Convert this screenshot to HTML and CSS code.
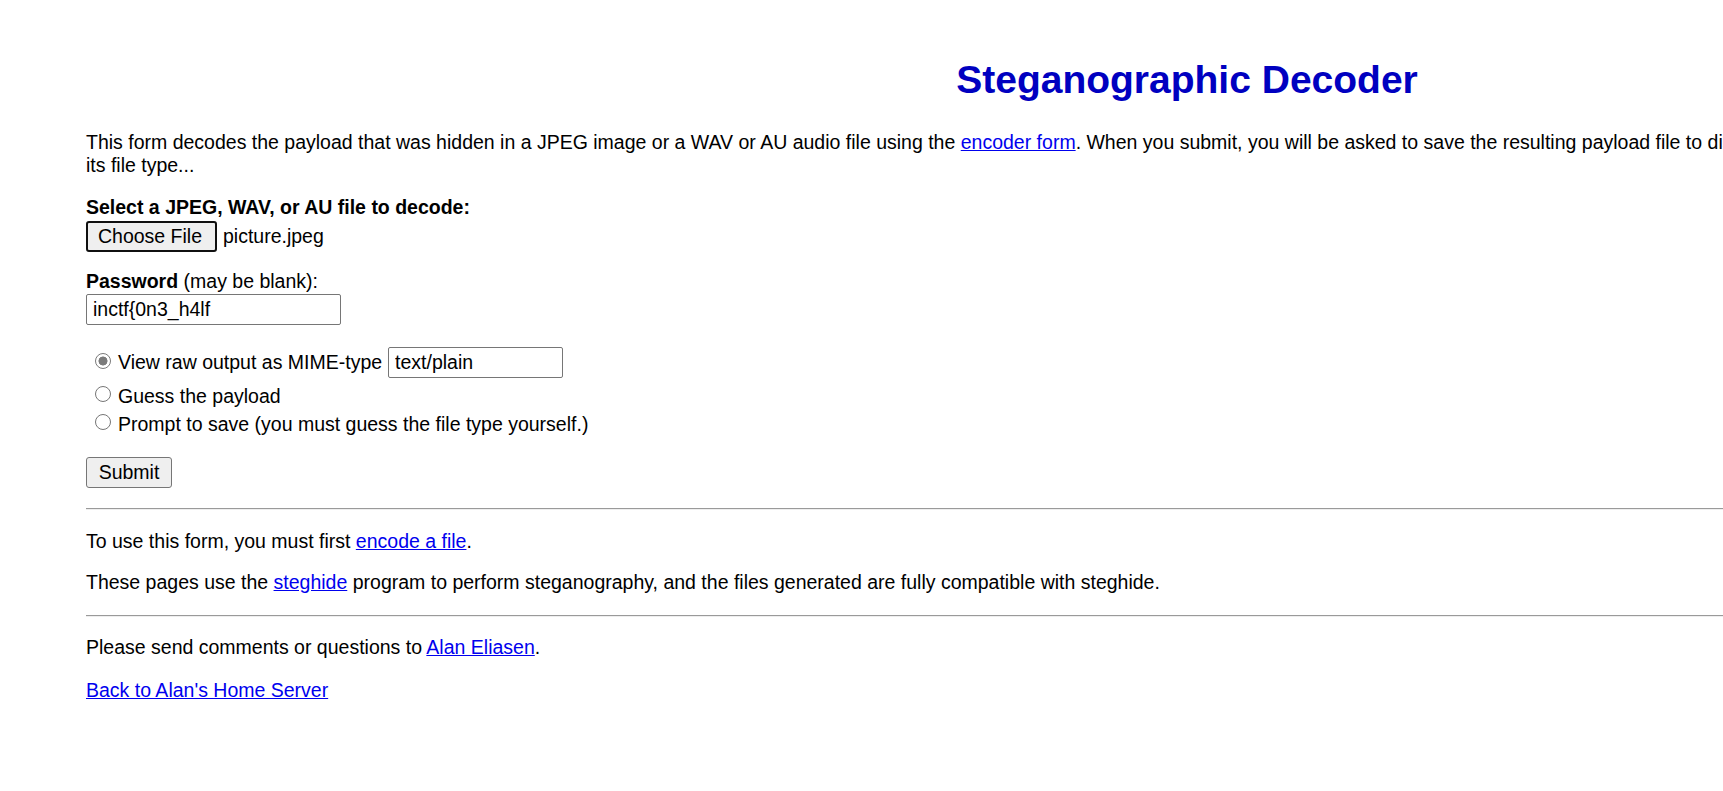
FILE: index.html
```html
<!DOCTYPE html>
<html lang="en">
<head>
<meta charset="utf-8">
<title>Steganographic Decoder</title>
<link rel="stylesheet" href="styles.css">
</head>
<body>
<div class="page">
  <h1 class="title">Steganographic Decoder</h1>
  <p class="intro">This form decodes the payload that was hidden in a JPEG image or a WAV or AU audio file using the <a href="#">encoder form</a>. When you submit, you will be asked to save the resulting payload file to disk. Choose "Guess the payload" to let the program guess<br>its file type...</p>

  <form class="form">
    <div class="field field--file">
      <div class="label"><b>Select a JPEG, WAV, or AU file to decode:</b></div>
      <div class="file-row">
        <span class="btn btn--file">Choose File</span>
        <span class="file-name">picture.jpeg</span>
      </div>
    </div>

    <div class="field field--pw">
      <div class="label"><b>Password</b> (may be blank):</div>
      <input class="text-input text-input--pw" type="text" value="inctf{0n3_h4lf">
    </div>

    <div class="radios">
      <label class="radio-row radio-row--mime">
        <input class="radio" type="radio" name="mode" checked>
        <span class="radio-text">View raw output as MIME-type</span>
        <input class="text-input text-input--mime" type="text" value="text/plain">
      </label>
      <label class="radio-row">
        <input class="radio" type="radio" name="mode">
        <span class="radio-text">Guess the payload</span>
      </label>
      <label class="radio-row">
        <input class="radio" type="radio" name="mode">
        <span class="radio-text">Prompt to save (you must guess the file type yourself.)</span>
      </label>
    </div>

    <button class="btn btn--submit" type="button">Submit</button>
  </form>

  <hr class="rule rule--first">
  <p class="note note--first">To use this form, you must first <a href="#">encode a file</a>.</p>
  <p class="note">These pages use the <a href="#">steghide</a> program to perform steganography, and the files generated are fully compatible with steghide.</p>
  <hr class="rule rule--second">
  <p class="note note--contact">Please send comments or questions to <a href="#">Alan Eliasen</a>.</p>
  <p class="note note--back"><a href="#">Back to Alan's Home Server</a></p>
</div>
</body>
</html>
```

FILE: styles.css
```css
html, body {
  margin: 0;
  padding: 0;
  background: #ffffff;
  overflow: hidden;
}

body {
  font-family: "Liberation Sans", Arial, sans-serif;
  font-size: 19.5px;
  line-height: 23px;
  color: #000000;
}

.page {
  width: 2202px;
  margin-left: 86px;
  padding-top: 57px;
}

a {
  color: #0000ee;
  text-decoration: underline;
}

.title {
  margin: 0;
  font-size: 39px;
  line-height: 45px;
  font-weight: bold;
  text-align: center;
  color: #0000c0;
}

.intro {
  margin: 29px 0 0;
}

.form {
  margin: 0;
}

.field--file {
  margin-top: 19px;
}

.field--pw {
  margin-top: 18px;
}

.file-row {
  display: flex;
  align-items: center;
  gap: 6px;
  margin-top: 2px;
  height: 31px;
}

.btn {
  display: inline-flex;
  align-items: center;
  justify-content: center;
  box-sizing: border-box;
  font-family: "Liberation Sans", Arial, sans-serif;
  font-size: 19.5px;
  line-height: 23px;
  color: #000000;
  background: #efefef;
  border-radius: 3px;
  padding: 0;
}

.btn--file {
  width: 131px;
  height: 31px;
  border: 2px solid #101010;
  padding-right: 3px;
}

.btn--submit {
  display: flex;
  width: 86px;
  height: 31px;
  margin-top: 19px;
  border: 1px solid #767676;
}

.text-input {
  box-sizing: border-box;
  height: 31px;
  font-family: "Liberation Sans", Arial, sans-serif;
  font-size: 19.5px;
  color: #000000;
  border: 1px solid #767676;
  border-radius: 2px;
  padding: 0 6px;
  background: #ffffff;
  outline: none;
}

.text-input--pw {
  display: block;
  width: 255px;
  margin-top: 1px;
}

.text-input--mime {
  width: 175px;
  margin-left: 6px;
}

.radios {
  margin-top: 22px;
  display: flex;
  flex-direction: column;
}

.radio-row {
  display: flex;
  align-items: center;
  height: 28px;
  padding-left: 9px;
}

.radio-row--mime {
  height: 31px;
  margin-bottom: 4px;
}

.radio {
  appearance: none;
  -webkit-appearance: none;
  box-sizing: border-box;
  width: 16px;
  height: 16px;
  margin: 0 7px 0 0;
  border: 1px solid #767676;
  border-radius: 50%;
  background: #ffffff;
  flex: none;
  position: relative;
  top: -2px;
}

.radio:checked {
  border-color: #7a7a7a;
  background: radial-gradient(circle, #7a7a7a 0, #7a7a7a 4.2px, #ffffff 4.8px);
}

.rule {
  border: 0;
  border-top: 1px solid #9a9a9a;
  border-bottom: 1px solid #eeeeee;
  height: 0;
  margin: 0;
}

.rule--first {
  margin-top: 20px;
}

.rule--second {
  margin-top: 21px;
}

.note {
  margin: 18px 0 0;
}

.note--first {
  margin-top: 20px;
}

.note--contact {
  margin-top: 19px;
}

.note--back {
  margin-top: 20px;
}
```
